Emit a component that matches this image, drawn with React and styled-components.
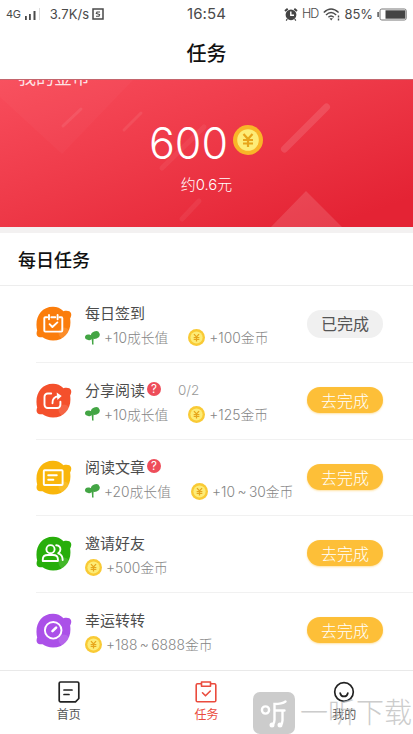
import React from 'react';
import styled, { createGlobalStyle } from 'styled-components';

const GlobalStyle = createGlobalStyle`
  * {
    box-sizing: border-box;
  }
  body {
    margin: 0;
    background: #fff;
    font-family: Inter, "Noto Sans CJK SC", sans-serif;
    overflow: hidden;
  }
  svg {
    display: block;
    flex: none;
  }
`;

const Screen = styled.div`
  position: relative;
  display: flex;
  flex-direction: column;
  width: 413px;
  height: 734px;
  overflow: hidden;
  background: #fff;
`;

const StatusBar = styled.div`
  display: grid;
  grid-template-columns: 1fr auto 1fr;
  align-items: center;
  height: 28px;
  padding: 0 6px;
  color: #4a4a4a;
  font-size: 13px;
  line-height: 28px;
`;

const StatusGroup = styled.div`
  display: flex;
  align-items: center;
  justify-content: ${p => (p.$end ? 'flex-end' : 'flex-start')};
  gap: ${p => p.$gap}px;
  white-space: nowrap;
`;

const Network = styled.span`
  font-size: 11px;
  letter-spacing: -0.3px;
`;

const Speed = styled.span`
  margin-left: 6px;
  letter-spacing: 0.1px;
`;

const Quality = styled.span`
  font-size: 12.5px;
  font-weight: 300;
  letter-spacing: -0.8px;
`;

const Percent = styled.span`
  letter-spacing: -0.1px;
`;

const Clock = styled.span`
  font-size: 15px;
  letter-spacing: 0.1px;
`;

const Header = styled.h1`
  height: 51px;
  margin: 0;
  color: #111;
  font-size: 20px;
  font-weight: 500;
  line-height: 52px;
  text-align: center;
`;

const Banner = styled.section`
  position: relative;
  height: 148px;
  overflow: hidden;
  border-top: 1px solid #c4656d;
  background: linear-gradient(160deg, #f84d5c 0%, #ee3948 45%, #e42334 90%);
  color: #fff;
  text-align: center;
`;

const Pattern = styled.svg`
  position: absolute;
  left: 0;
  top: 0;
`;

const BannerTitle = styled.div`
  height: 22px;
  margin: -13px 0 0 18px;
  color: rgba(255, 255, 255, 0.85);
  font-size: 18px;
  line-height: 22px;
  text-align: left;
`;

const Amount = styled.div`
  position: relative;
  display: flex;
  align-items: center;
  gap: 5px;
  height: 50px;
  margin: 29px 0 0 149px;
  font-size: 43px;
  font-weight: 300;
  line-height: 50px;

  svg {
    margin-bottom: 7px;
  }
`;

const Approx = styled.div`
  position: relative;
  margin-top: 5px;
  font-size: 14.9px;
  font-weight: 300;
  line-height: 24px;
`;

const SectionTitle = styled.h2`
  height: 59px;
  margin: 0;
  padding-left: 18px;
  border-top: 6px solid #f3f1f1;
  border-bottom: 1px solid #ededed;
  color: #111;
  font-size: 18px;
  font-weight: 500;
  line-height: 56px;
`;

const TaskList = styled.div`
  height: 384px;
  padding-left: 36px;
`;

const TaskRow = styled.div`
  display: flex;
  height: 76.8px;
  padding: 15px 30px 0 0;
  border-bottom: ${p => (p.$last ? 'none' : '1px solid #f1f1f1')};
`;

const TaskIcon = styled.svg`
  margin-top: 5px;
`;

const TaskBody = styled.div`
  flex: 1;
  margin-left: 13px;
`;

const TaskTitle = styled.div`
  display: flex;
  align-items: center;
  height: 25px;
  color: #4c4c4c;
  font-size: 15px;
  line-height: 25px;
  white-space: nowrap;
`;

const Help = styled.span`
  width: 14px;
  height: 14px;
  margin: 0 0 2px 2px;
  border-radius: 50%;
  background: #ee4d5a;
  color: #fff;
  font-size: 11.5px;
  line-height: 14px;
  text-align: center;
`;

const Progress = styled.span`
  margin-left: 17px;
  color: #999;
  font-size: 13.5px;
  font-weight: 300;
`;

const Rewards = styled.div`
  display: flex;
  gap: 20px;
  height: 25px;
`;

const Reward = styled.span`
  display: flex;
  align-items: center;
  gap: 4px;
  color: #858585;
  font-size: 13.8px;
  font-weight: 300;
  line-height: 25px;
  white-space: nowrap;
  word-spacing: -1.4px;

  svg {
    margin-bottom: 2px;
  }
`;

const TaskButton = styled.button`
  flex: none;
  width: 76px;
  height: ${p => (p.$done ? 28 : 26)}px;
  margin: 9px 0 0;
  padding: 0;
  border: 0;
  border-radius: 14px;
  background: ${p => (p.$done ? '#f0f0f0' : '#fdbf38')};
  box-shadow: ${p => (p.$done ? 'none' : '0 1px 2px rgba(253, 191, 56, 0.45)')};
  color: ${p => (p.$done ? '#555' : '#fff')};
  font-family: inherit;
  font-size: 16px;
  font-weight: ${p => (p.$done ? 400 : 300)};
  line-height: 29px;
`;

const TabBar = styled.nav`
  display: grid;
  grid-template-columns: repeat(3, 1fr);
  height: 64px;
  border-top: 1px solid #e9e9e9;
`;

const Tab = styled.div`
  display: flex;
  flex-direction: column;
  align-items: center;
  padding-top: 10px;
  color: ${p => (p.$active ? '#ea4b3d' : '#555')};
  font-size: 12px;
  line-height: 20px;

  svg {
    margin-bottom: 2px;
  }
`;

const Watermark = styled.div`
  position: absolute;
  left: 253px;
  bottom: 0;
  display: flex;
  align-items: center;
  gap: 5px;
  color: #bbb;
  font-size: 28px;
  font-weight: 300;
  line-height: 42px;
  white-space: nowrap;
  opacity: 0.75;
`;

const Signal = () => (
  <svg width="17" height="12" viewBox="0 0 17 12" fill="#4a4a4a">
    <path d="M1 8h1.8v4H1zM5 6h1.8v6H5zM9.5 3h2v9h-2z" />
    <path d="M15 0h1v12h-1z" fill="#ddd" />
  </svg>
);

const SimBadge = () => (
  <svg width="12" height="12" viewBox="0 0 12 12" fill="none" stroke="#4a4a4a">
    <path d="M1 1h10v10H1z" strokeWidth="1.5" />
    <path d="M8 4H5L4.3 5.4 7.6 6.6 7 8.2H4" strokeWidth="1.1" />
  </svg>
);

const Alarm = () => (
  <svg width="14" height="13" viewBox="0 0 14 13">
    <circle cx="7" cy="6.8" r="5.4" fill="#444" />
    <path d="M1 3 3.7.8M13 3 10.3.8" stroke="#444" strokeWidth="2" />
    <path d="M3.2 11 2.2 12.6M10.8 11l1 1.6" stroke="#444" strokeWidth="1.2" />
    <path d="M6.8 3.6V7.2H10" fill="none" stroke="#fff" strokeWidth="1.4" />
  </svg>
);

const Wifi = () => (
  <svg width="18" height="13" viewBox="0 0 18 13" fill="none" stroke="#4a4a4a" strokeWidth="1.4">
    <path d="M.8 4.6Q8 -2.4 15.6 4.6M3 6.9Q8 2 13.2 6.9M5.4 9.2Q8 6.6 10.8 9.2" />
    <path d="M6.5 10.2h3.4L8.2 12.4z" fill="#4a4a4a" stroke="none" />
    <path d="M15.5 7.4v2M15.5 10.4v2" />
  </svg>
);

const Battery = () => (
  <svg width="30" height="13" viewBox="0 0 30 13">
    <rect x="3" y="1" width="26.2" height="11" rx="1.8" fill="#fff" stroke="#777" />
    <path d="M8.5 2.3h19.8v8.4H8.5z" fill="#444" />
    <path d="M1.1 4v5" stroke="#555" strokeWidth="1.5" />
  </svg>
);

const Coin = ({ size }) => (
  <svg width={size} height={size} viewBox="0 0 30 30" fill="none">
    <circle cx="15" cy="15" r="15" fill={size > 20 ? '#f9b528' : '#f9ca35'} />
    <circle cx="15" cy="15" r="10.8" fill="#fdec77" />
    <path d="M10.5 9 15 14l4.5-5M10 15h10M10 18.5h10M15 14v8" stroke="#e7a51b" strokeWidth="2.2" />
  </svg>
);

const Sprout = () => (
  <svg width="15" height="14" viewBox="0 0 15 14" fill="#43a544">
    <ellipse cx="10.4" cy="4" rx="4.4" ry="3.7" transform="rotate(-20 10.4 4)" />
    <ellipse cx="3.7" cy="6.3" rx="3.7" ry="2.8" transform="rotate(12 3.7 6.3)" />
    <path d="M6 6h3c-.6 2.300-.6 5-.4 7.600H7C7.100 11 7 9 6 6z" />
  </svg>
);

const GLYPHS = {
  sign: (
    <>
      <path d="M11.2 11.2H9.3a1 1 0 0 0-1 1v12.4a1 1 0 0 0 1 1h16a1 1 0 0 0 1-1V12.2a1 1 0 0 0-1-1h-1.900M15.300 11.200h4" />
      <path d="M13 9v4.2M21.6 9v4.2M13.6 18.2l2.8 2.8 5-4.6" />
    </>
  ),
  share: (
    <>
      <path d="M15.2 10.5h-3.5a3.2 3.2 0 0 0-3.2 3.2v8.1a3.2 3.2 0 0 0 3.2 3.2h9.5a3.2 3.2 0 0 0 3.2-3.2v-3" />
      <path d="M16.5 20.2c-.4-4.1 2-6.7 6-7" />
      <path d="m20.7 9.4 5 3.5-4.3 4.2z" fill="#fff" stroke="none" />
    </>
  ),
  read: (
    <>
      <rect x="7.8" y="10.2" width="18.8" height="14.8" rx=".8" />
      <path d="M12.2 15.3h8.6M12.2 19.7h5.2" />
    </>
  ),
  invite: (
    <>
      <circle cx="14.5" cy="13.2" r="4.1" />
      <path d="M6.8 25v-1.8c0-2.6 2.1-4.2 5.1-4.2h4.9c3.1 0 5.1 1.6 5.1 4.2V25zM20.2 9.2c3 .2 4.4 2.3 4.2 4.5-.1 1.8-1 2.8-2.2 3.6 3.7 1.2 4.5 3 4.5 6.7" />
    </>
  ),
  lucky: (
    <>
      <circle cx="17.2" cy="17.3" r="8.3" />
      <path d="m16.5 18.2 3.6-3.6" strokeWidth="2.6" />
    </>
  ),
};

const TASKS = [
  { icon: 'sign', color: '#fb7d0c', title: '每日签到', growth: '+10成长值', coins: '+100金币', done: true },
  { icon: 'share', color: '#f4502c', title: '分享阅读', help: true, progress: '0/2', growth: '+10成长值', coins: '+125金币' },
  { icon: 'read', color: '#f9b60b', title: '阅读文章', help: true, growth: '+20成长值', coins: '+10 ~ 30金币' },
  { icon: 'invite', color: '#28ae0b', title: '邀请好友', coins: '+500金币' },
  { icon: 'lucky', color: '#ab50e8', title: '幸运转转', coins: '+188 ~ 6888金币' },
];

const Task = ({ task, last }) => (
  <TaskRow $last={last}>
    <TaskIcon width="36" height="36" viewBox="0 0 36 36" fill="none">
      <path
        d="M17 .8c4.3 0 7.2 1.4 10.6 4.4 2.2-.8 6.8-.8 7.5 2.2.5 2-.3 3.4-1 5.1 2 11.8-5.1 22-17 22-4.5 0-8-1.5-10.5-3.3-1.8.3-4.8.1-5.7-2-.7-1.6-.2-3.3.3-4.6C-1.8 12.5 4.5.8 17 .8z"
        fill={task.color}
      />
      <circle cx="28" cy="27" r="5.5" fill="#fff" opacity=".12" />
      <g stroke="#fff" strokeWidth="1.9" strokeLinecap="round" strokeLinejoin="round">{GLYPHS[task.icon]}</g>
    </TaskIcon>
    <TaskBody>
      <TaskTitle>
        {task.title}
        {task.help && <Help>?</Help>}
        {task.progress && <Progress>{task.progress}</Progress>}
      </TaskTitle>
      <Rewards>
        {task.growth && (
          <Reward><Sprout />{task.growth}</Reward>
        )}
        <Reward><Coin size={17} />{task.coins}</Reward>
      </Rewards>
    </TaskBody>
    <TaskButton $done={task.done}>{task.done ? '已完成' : '去完成'}</TaskButton>
  </TaskRow>
);

const App = () => (
  <Screen>
    <GlobalStyle />
    <StatusBar>
      <StatusGroup $gap={3}>
        <Network>4G</Network>
        <Signal />
        <Speed>3.7K/s</Speed>
        <SimBadge />
      </StatusGroup>
      <Clock>16:54</Clock>
      <StatusGroup $end $gap={4}>
        <Alarm />
        <Quality>HD</Quality>
        <Wifi />
        <Percent>85%</Percent>
        <Battery />
      </StatusGroup>
    </StatusBar>
    <Header>任务</Header>
    <Banner>
      <Pattern width="413" height="148" viewBox="0 0 413 148" fill="none" stroke="#fff" strokeLinecap="round">
        <path d="M0 17 62 74 133 0H0z" fill="#fff" stroke="none" opacity=".025" />
        <path d="m63 46 18-17M124 50l17-17" strokeWidth="3" opacity=".08" />
        <path d="m162 88 42-41M182 139l17-18" strokeWidth="5" opacity=".06" />
        <path d="m284.5 69 42-42" strokeWidth="7" opacity=".12" />
        <path d="m270 148 36-37 37 37z" fill="#fff" stroke="none" opacity=".13" />
      </Pattern>
      <BannerTitle>我的金币</BannerTitle>
      <Amount>600<Coin size={30} /></Amount>
      <Approx>约0.6元</Approx>
    </Banner>
    <SectionTitle>每日任务</SectionTitle>
    <TaskList>
      {TASKS.map((task, i) => (
        <Task key={task.title} task={task} last={i === TASKS.length - 1} />
      ))}
    </TaskList>
    <TabBar>
      <Tab>
        <svg width="22" height="22" viewBox="0 0 22 22" fill="none" stroke="#222" strokeWidth="1.7" strokeLinejoin="round" strokeLinecap="round">
          <path d="M2.5 1h17a1.3 1.3 0 0 1 1.3 1.3V17.5L17.5 20.8h-15a1.3 1.3 0 0 1-1.3-1.3V2.3A1.3 1.3 0 0 1 2.5 1zM6 9h8M6 13.5h5" />
        </svg>
        首页
      </Tab>
      <Tab $active>
        <svg width="22" height="22" viewBox="0 0 22 22" fill="none" stroke="#ea4b3d" strokeWidth="1.6" strokeLinejoin="round" strokeLinecap="round">
          <path d="M6 2.8H2.5A1.3 1.3 0 0 0 1.2 4v15.5a1.3 1.3 0 0 0 1.3 1.3h17a1.3 1.3 0 0 0 1.3-1.3V4a1.3 1.3 0 0 0-1.3-1.2H16M6.5 1h9v4.3h-9zM7.5 11.8l3 3 4.8-4.8" />
        </svg>
        任务
      </Tab>
      <Tab>
        <svg width="22" height="22" viewBox="0 0 22 22" fill="none" stroke="#222" strokeWidth="1.7" strokeLinecap="round">
          <circle cx="11" cy="11" r="9.3" />
          <path d="M7.2 12.2c1 4.3 6.6 4.3 7.6 0" />
        </svg>
        我的
      </Tab>
    </TabBar>
    <Watermark>
      <svg width="42" height="42" viewBox="0 0 42 42" fill="none" stroke="#fff" strokeWidth="2.4" strokeLinecap="round">
        <rect width="42" height="42" rx="7" fill="#bbb" stroke="none" />
        <circle cx="12.5" cy="18" r="3.6" />
        <path d="M32.500 9.500q-3.500 2.500-11 2.500v16q0 3-2 5M22 18.500h9.500M29.500 18.500v10q0 3-2 4.500" />
        <circle cx="19" cy="33" r="1.300" fill="#fff" />
        <circle cx="27" cy="33" r="1.300" fill="#fff" />
      </svg>
      一听下载
    </Watermark>
  </Screen>
);

export default App;
